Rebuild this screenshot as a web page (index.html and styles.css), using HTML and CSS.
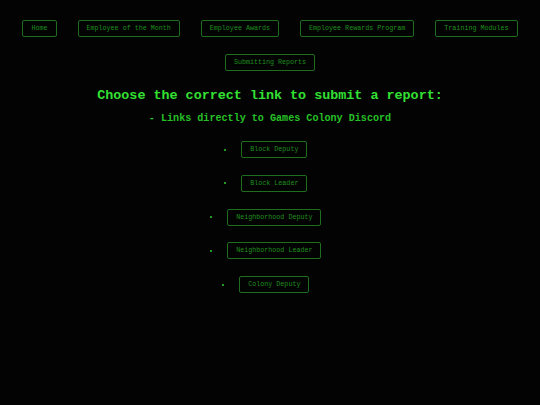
FILE: index.html
```html
<!DOCTYPE html>
<html>
<head>
<meta charset="utf-8">
<link rel="stylesheet" href="styles.css">
</head>
<body>
<nav class="nav">
  <a class="btn" href="#">Home</a>
  <a class="btn" href="#">Employee of the Month</a>
  <a class="btn" href="#">Employee Awards</a>
  <a class="btn" href="#">Employee Rewards Program</a>
  <a class="btn" href="#">Training Modules</a>
  <a class="btn" href="#">Submitting Reports</a>
</nav>
<main class="main">
  <h1 class="title">Choose the correct link to submit a report:</h1>
  <h2 class="subtitle">- Links directly to Games Colony Discord</h2>
  <ul class="links">
    <li class="item"><span class="dot"></span><a class="btn" href="#">Block Deputy</a></li>
    <li class="item"><span class="dot"></span><a class="btn" href="#">Block Leader</a></li>
    <li class="item"><span class="dot"></span><a class="btn" href="#">Neighborhood Deputy</a></li>
    <li class="item"><span class="dot"></span><a class="btn" href="#">Neighborhood Leader</a></li>
    <li class="item"><span class="dot"></span><a class="btn" href="#">Colony Deputy</a></li>
  </ul>
</main>
</body>
</html>
```
FILE: styles.css
```css
html, body {
  margin: 0;
  padding: 0;
  background: #030303;
  height: 100%;
}
body {
  font-family: "Liberation Mono", "Courier New", monospace;
  color: #2fd62f;
}
.nav {
  display: flex;
  flex-wrap: wrap;
  justify-content: center;
  column-gap: 21px;
  row-gap: 17px;
  padding: 20px 10px 0;
}
.btn {
  display: inline-block;
  font-size: 6.7px;
  line-height: 7px;
  padding: 4px 8px;
  border: 1px solid #1e6e1e;
  border-radius: 2px;
  color: #1f8f1f;
  text-decoration: none;
  white-space: nowrap;
}
.main {
  display: flex;
  flex-direction: column;
  align-items: center;
}
.title {
  margin: 16.7px 0 0;
  font-size: 13.4px;
  line-height: 16px;
  font-weight: bold;
  color: #33e033;
}
.subtitle {
  margin: 9.3px 0 0;
  font-size: 10.1px;
  line-height: 12px;
  font-weight: bold;
  color: #27c027;
}
.links {
  list-style: none;
  margin: 16.3px 0 0;
  padding: 0 10.6px 0 0;
  display: flex;
  flex-direction: column;
  align-items: center;
  row-gap: 16.7px;
}
.item {
  display: flex;
  align-items: center;
  column-gap: 13.3px;
}
.dot {
  width: 2px;
  height: 2px;
  margin: 0 2px;
  background: #1f9a1f;
}
```
